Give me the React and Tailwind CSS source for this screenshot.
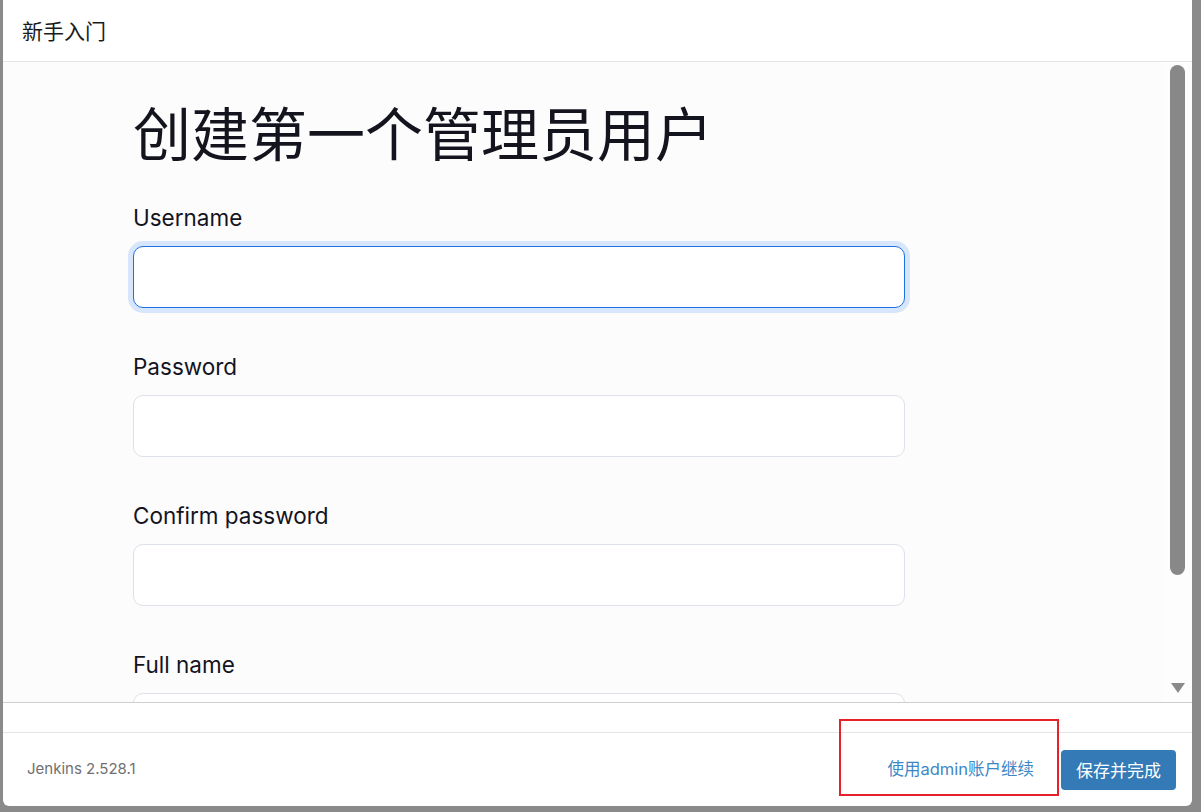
export default function App() {
  const fields = ["Username", "Password", "Confirm password", "Full name"];
  return (
    <div
      className="w-[1201px] h-[812px] bg-[#8a8a8a] pl-[3px] pr-[9px] pb-[6px] overflow-hidden"
      style={{ fontFamily: 'Inter, "Noto Sans CJK SC", sans-serif' }}
    >
      <div className="relative w-full h-full bg-white rounded-b-[6px] flex flex-col overflow-hidden">
        {/* header */}
        <div className="h-[62px] shrink-0 border-b border-[#e5e5e5] flex items-center px-[19px]">
          <span className="text-[21px] text-[#1a1a1a] leading-none" style={{ fontFamily: '"Noto Sans CJK SC", sans-serif' }}>
            新手入门
          </span>
        </div>
        {/* body */}
        <div className="h-[641px] shrink-0 border-b border-[#cfcfcf] bg-[#fcfcfc] flex overflow-hidden">
          <div className="flex-1 pl-[130px] pt-[35px] overflow-hidden">
            <h1
              className="text-[58px] leading-[68px] text-[#14141f] font-normal"
              style={{ fontFamily: '"Noto Sans CJK SC", sans-serif' }}
            >
              创建第一个管理员用户
            </h1>
            <div className="mt-[39px] w-[772px] flex flex-col">
              {fields.map((f, i) => (
                <div key={f} className="flex flex-col mb-[45px]">
                  <label className="text-[22.5px] leading-[28px] text-[#14141f] mb-[14px] font-normal">{f}</label>
                  {i === 0 ? (
                    <div className="h-[62px] rounded-[10px] border border-[#1f6fe5] bg-white shadow-[0_0_0_5px_#d7e6fb]" />
                  ) : (
                    <div className="h-[62px] rounded-[10px] border border-[#dde1ea] bg-white" />
                  )}
                </div>
              ))}
            </div>
          </div>
          {/* scrollbar */}
          <div className="w-[28px] shrink-0 bg-[#fdfdfd] flex flex-col items-start pl-[6px] pt-[3px] pb-[8px]">
            <div className="w-[15px] h-[510px] rounded-full bg-[#888888]" />
            <div className="flex-1" />
            <svg width="16" height="12" viewBox="0 0 16 12">
              <path d="M1 1 L15 1 L8 11 Z" fill="#8a8a8a" />
            </svg>
          </div>
        </div>
        {/* gap */}
        <div className="h-[30px] shrink-0 border-b border-[#e5e5e5] bg-white" />
        {/* footer */}
        <div className="flex-1 flex items-center pl-[24px] pr-[16px]">
          <span className="text-[15px] text-[#707070]">Jenkins 2.528.1</span>
          <div className="flex-1" />
          <span className="text-[16.5px] text-[#3d87c5] mr-[27px]">
            使用admin账户继续
          </span>
          <button
            className="w-[115px] h-[40px] rounded-[4px] bg-[#337ab7] text-white text-[17px]"
            style={{ fontFamily: '"Noto Sans CJK SC", sans-serif' }}
          >
            保存并完成
          </button>
        </div>
        {/* annotation box */}
        <div className="absolute left-[836px] top-[719px] w-[220px] h-[77px] border-2 border-[#e8202a]" />
      </div>
    </div>
  );
}
